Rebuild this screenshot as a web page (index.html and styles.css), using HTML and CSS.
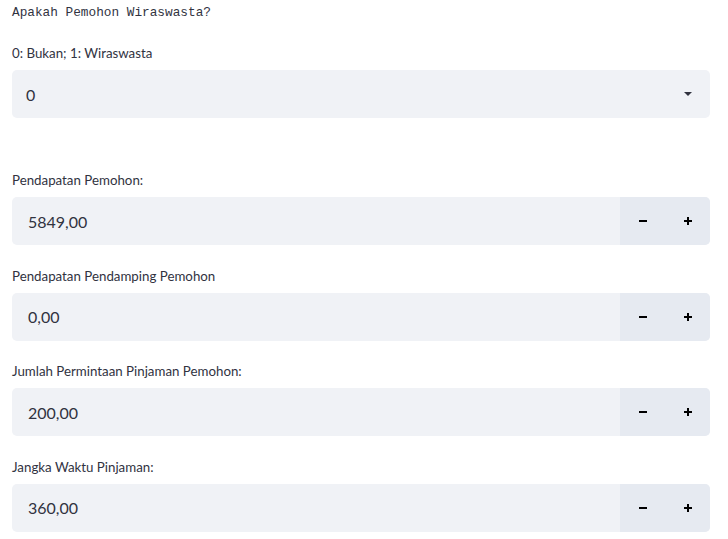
FILE: index.html
```html
<!DOCTYPE html>
<html lang="id">
<head>
<meta charset="utf-8">
<title>Form</title>
<link rel="stylesheet" href="styles.css">
</head>
<body>
<main class="page">
  <div class="mono">Apakah Pemohon Wiraswasta?</div>

  <div class="widget select-widget">
    <label class="label">0: Bukan; 1: Wiraswasta</label>
    <div class="box select">
      <span class="value">0</span>
      <svg class="caret" width="8" height="4" viewBox="0 0 8 4"><path d="M0 0H8L4 4Z" fill="#31333f"/></svg>
    </div>
  </div>

  <div class="widget">
    <label class="label">Pendapatan Pemohon:</label>
    <div class="box number">
      <span class="value num">5849,00</span>
      <div class="steps">
        <button class="step"><svg width="8" height="8" viewBox="0 0 8 8"><path d="M0 4H8" stroke="#000" stroke-width="2"/></svg></button>
        <button class="step"><svg width="8" height="8" viewBox="0 0 8 8"><path d="M0 4H8M4 0V8" stroke="#000" stroke-width="2"/></svg></button>
      </div>
    </div>
  </div>

  <div class="widget">
    <label class="label">Pendapatan Pendamping Pemohon</label>
    <div class="box number">
      <span class="value num">0,00</span>
      <div class="steps">
        <button class="step"><svg width="8" height="8" viewBox="0 0 8 8"><path d="M0 4H8" stroke="#000" stroke-width="2"/></svg></button>
        <button class="step"><svg width="8" height="8" viewBox="0 0 8 8"><path d="M0 4H8M4 0V8" stroke="#000" stroke-width="2"/></svg></button>
      </div>
    </div>
  </div>

  <div class="widget">
    <label class="label">Jumlah Permintaan Pinjaman Pemohon:</label>
    <div class="box number">
      <span class="value num">200,00</span>
      <div class="steps">
        <button class="step"><svg width="8" height="8" viewBox="0 0 8 8"><path d="M0 4H8" stroke="#000" stroke-width="2"/></svg></button>
        <button class="step"><svg width="8" height="8" viewBox="0 0 8 8"><path d="M0 4H8M4 0V8" stroke="#000" stroke-width="2"/></svg></button>
      </div>
    </div>
  </div>

  <div class="widget">
    <label class="label">Jangka Waktu Pinjaman:</label>
    <div class="box number">
      <span class="value num">360,00</span>
      <div class="steps">
        <button class="step"><svg width="8" height="8" viewBox="0 0 8 8"><path d="M0 4H8" stroke="#000" stroke-width="2"/></svg></button>
        <button class="step"><svg width="8" height="8" viewBox="0 0 8 8"><path d="M0 4H8M4 0V8" stroke="#000" stroke-width="2"/></svg></button>
      </div>
    </div>
  </div>
</main>
</body>
</html>
```
FILE: styles.css
```css
* { box-sizing: border-box; }
html, body { margin: 0; padding: 0; background: #fff; }
body {
  font-family: Lato, "Noto Sans", sans-serif;
  color: #31333f;
}
.page {
  display: flex;
  flex-direction: column;
  gap: 20.5px;
  padding: 2.5px 18px 0 12px;
}
.mono {
  font-family: "Liberation Mono", "DejaVu Sans Mono", monospace;
  font-size: 12.75px;
  line-height: 20px;
  color: #31333f;
}
.widget {
  display: flex;
  flex-direction: column;
  gap: 7px;
}
.select-widget { margin-bottom: 31.5px; }
.label {
  font-size: 13.3px;
  line-height: 20px;
  color: #31333f;
}
.box {
  height: 48px;
  background: #f0f2f6;
  border-radius: 5px;
  display: flex;
  align-items: center;
  overflow: hidden;
}
.select { padding: 0 18px 0 14px; justify-content: space-between; }
.number { padding-left: 16px; }
.value { font-size: 16px; color: #31333f; flex: 1; }
.caret { display: block; }
.steps {
  display: flex;
  height: 100%;
  width: 90px;
  background: #e6eaf1;
}
.step {
  flex: 1;
  border: 0;
  background: transparent;
  padding: 0;
  display: flex;
  align-items: center;
  justify-content: center;
}
.step svg { display: block; }
```
